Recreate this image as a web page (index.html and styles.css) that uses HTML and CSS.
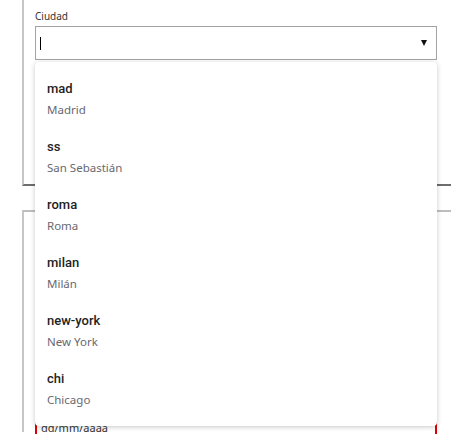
FILE: index.html
```html
<!DOCTYPE html>
<html lang="es">
<head>
<meta charset="utf-8">
<title>Ciudad</title>
<link rel="stylesheet" href="styles.css">
</head>
<body>
<div class="page">
  <section class="card card-top">
    <div class="field combo">
      <label class="label">Ciudad</label>
      <div class="input select">
        <span class="caret"></span>
        <span class="arrow"></span>
      </div>
      <ul class="menu">
        <li class="option"><div class="opt-title">mad</div><div class="opt-sub">Madrid</div></li>
        <li class="option"><div class="opt-title">ss</div><div class="opt-sub">San Sebastián</div></li>
        <li class="option"><div class="opt-title">roma</div><div class="opt-sub">Roma</div></li>
        <li class="option"><div class="opt-title">milan</div><div class="opt-sub">Milán</div></li>
        <li class="option"><div class="opt-title">new-york</div><div class="opt-sub">New York</div></li>
        <li class="option"><div class="opt-title">chi</div><div class="opt-sub">Chicago</div></li>
      </ul>
    </div>
  </section>
  <section class="card card-bottom">
    <div class="input"></div>
    <div class="input area"></div>
    <div class="input date">dd/mm/aaaa</div>
  </section>
</div>
</body>
</html>
```
FILE: styles.css
```css
html, body {
  margin: 0;
  padding: 0;
  background: #ffffff;
  overflow: hidden;
  width: 451px;
  height: 434px;
}

body {
  font-family: "Noto Sans", "Open Sans", sans-serif;
  color: #222;
}

.page {
  box-sizing: border-box;
  padding-left: 22px;
  width: 451px;
}

.card {
  box-sizing: border-box;
  width: 100%;
  padding-left: 11px;
}

.card-top {
  border-left: 2px solid #c6c6c6;
  border-bottom: 2px solid #6e6e6e;
  height: 186px;
  padding-top: 10px;
}

.card-bottom {
  margin-top: 24px;
  border-left: 2px solid #c6c6c6;
  border-top: 2px solid #bdbdbd;
  padding-top: 14px;
  height: 222px;
  display: flex;
  flex-direction: column;
  gap: 32px;
}

.card-bottom .input {
  width: 402px;
  flex: none;
}

.field {
  display: flex;
  flex-direction: column;
  width: 402px;
}

.combo {
  position: relative;
}

.label {
  font-size: 10px;
  line-height: 12px;
  height: 12px;
  margin-bottom: 4px;
  color: #333;
}

.input {
  box-sizing: border-box;
  height: 34px;
  border: 1px solid #a3a3a3;
  background: #fff;
}

.area {
  height: 96px;
}

.select {
  display: flex;
  align-items: center;
  justify-content: space-between;
  padding: 0 9px 0 4px;
}

.caret {
  width: 1px;
  height: 13px;
  background: #000;
}

.arrow {
  width: 0;
  height: 0;
  border-left: 3.5px solid transparent;
  border-right: 3.5px solid transparent;
  border-top: 6px solid #111;
}

.menu {
  position: absolute;
  top: 52px;
  left: 0;
  width: 402px;
  box-sizing: border-box;
  margin: 0;
  padding: 0 0 16px;
  list-style: none;
  background: #fff;
  border-radius: 4px;
  box-shadow: 0 1px 5px rgba(0, 0, 0, 0.22);
  z-index: 10;
}

.option {
  padding: 18px 12px 2px;
  height: 58px;
  box-sizing: border-box;
}

.opt-title {
  font-family: Roboto, "Noto Sans", sans-serif;
  font-size: 13px;
  line-height: 17px;
  font-weight: 500;
  color: #1e1e1e;
}

.opt-sub {
  margin-top: 4px;
  font-size: 11.5px;
  line-height: 17px;
  color: #686870;
}

.date {
  border: 2px solid #e00000;
  font-size: 11px;
  line-height: 12px;
  padding: 0 4px;
  color: #333;
}
```
